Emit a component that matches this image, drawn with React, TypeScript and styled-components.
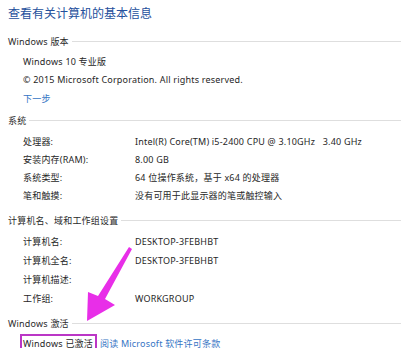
import React from "react";
import styled, { createGlobalStyle } from "styled-components";

const GlobalStyle = createGlobalStyle`
	html, body {
		margin: 0;
		padding: 0;
		background: #fff;
	}
	body {
		font-family: "Noto Sans", "Noto Sans CJK SC", sans-serif;
		color: #262626;
	}
`;

const Page = styled.div`
	position: relative;
	width: 401px;
	height: 348px;
	overflow: hidden;
	box-sizing: border-box;
	padding: 5px 0 0 8px;
`;

const Title = styled.h1`
	margin: 0 0 8px;
	height: 18px;
	line-height: 18px;
	font-size: 12px;
	font-weight: normal;
	color: #24509c;
`;

const Section = styled.section<{ $gap?: number }>`
	margin-top: ${(p) => p.$gap ?? 0}px;
`;

const Heading = styled.div`
	display: flex;
	align-items: center;
	height: 22px;
	padding-bottom: 1px;
	box-sizing: border-box;
	font-size: 9px;
	letter-spacing: 0.2px;
	color: #2a2a2a;

	&::after {
		content: "";
		flex: 1;
		height: 1px;
		margin-left: 3px;
		background: #dedede;
	}
`;

const Row = styled.div<{ $h?: number }>`
	display: grid;
	grid-template-columns: 112px 1fr;
	align-items: center;
	height: ${(p) => p.$h ?? 18}px;
	padding-left: 15px;
	font-size: 9px;
	letter-spacing: 0.2px;
	white-space: nowrap;
`;

const Line = styled(Row)`
	display: block;
	line-height: ${(p) => p.$h ?? 18}px;
`;

const Link = styled.span`
	color: #3574c4;
`;

const Marked = styled.span`
	border: 2px solid #bb36c6;
	padding: 1px 2px 2px 1px;
	margin-left: -3px;
	margin-right: 3px;
`;

const Arrow = styled.svg`
	position: absolute;
	left: 0;
	top: 0;
	pointer-events: none;
`;

const sections = [
	{
		title: "系统",
		gap: 1,
		h: 18,
		rows: [
			["处理器:", "Intel(R) Core(TM) i5-2400 CPU @ 3.10GHz   3.40 GHz"],
			["安装内存(RAM):", "8.00 GB"],
			["系统类型:", "64 位操作系统，基于 x64 的处理器"],
			["笔和触摸:", "没有可用于此显示器的笔或触控输入"]
		]
	},
	{
		title: "计算机名、域和工作组设置",
		gap: 6,
		h: 19,
		rows: [
			["计算机名:", "DESKTOP-3FEBHBT"],
			["计算机全名:", "DESKTOP-3FEBHBT"],
			["计算机描述:", ""],
			["工作组:", "WORKGROUP"]
		]
	}
];

const App: React.FC = () => (
	<>
		<GlobalStyle />
		<Page>
			<Title>查看有关计算机的基本信息</Title>
			<Section>
				<Heading>Windows 版本</Heading>
				<Line>Windows 10 专业版</Line>
				<Line>© 2015 Microsoft Corporation. All rights reserved.</Line>
				<Line $h={20}>
					<Link>下一步</Link>
				</Line>
			</Section>
			{sections.map((s) => (
				<Section key={s.title} $gap={s.gap}>
					<Heading>{s.title}</Heading>
					{s.rows.map(([label, value]) => (
						<Row key={label} $h={s.h}>
							<span>{label}</span>
							<span style={{ whiteSpace: "pre" }}>{value}</span>
						</Row>
					))}
				</Section>
			))}
			<Section $gap={5}>
				<Heading>Windows 激活</Heading>
				<Line>
					<Marked>Windows 已激活</Marked>
					<Link>阅读 Microsoft 软件许可条款</Link>
				</Line>
			</Section>
			<Arrow width="401" height="348" viewBox="0 0 401 348">
				<polygon
					fill="#e82ee8"
					points="129,247 132,249 105,299 115,305 87,321 88,292 98,296"
				/>
			</Arrow>
		</Page>
	</>
);

export default App;
